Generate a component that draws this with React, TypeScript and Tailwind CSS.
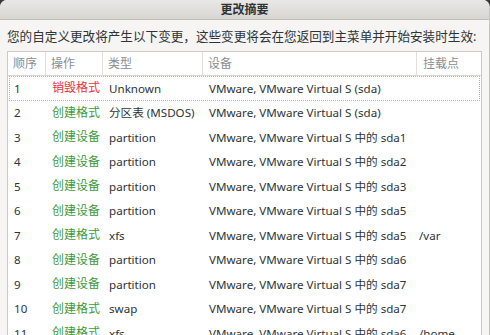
import React from "react";

const rows: [string, string, string, string, string][] = [
  ["1", "销毁格式", "Unknown", "VMware, VMware Virtual S (sda)", ""],
  ["2", "创建格式", "分区表 (MSDOS)", "VMware, VMware Virtual S (sda)", ""],
  ["3", "创建设备", "partition", "VMware, VMware Virtual S 中的 sda1", ""],
  ["4", "创建设备", "partition", "VMware, VMware Virtual S 中的 sda2", ""],
  ["5", "创建设备", "partition", "VMware, VMware Virtual S 中的 sda3", ""],
  ["6", "创建设备", "partition", "VMware, VMware Virtual S 中的 sda5", ""],
  ["7", "创建格式", "xfs", "VMware, VMware Virtual S 中的 sda5", "/var"],
  ["8", "创建设备", "partition", "VMware, VMware Virtual S 中的 sda6", ""],
  ["9", "创建设备", "partition", "VMware, VMware Virtual S 中的 sda7", ""],
  ["10", "创建格式", "swap", "VMware, VMware Virtual S 中的 sda7", ""],
  ["11", "创建格式", "xfs", "VMware, VMware Virtual S 中的 sda6", "/home"],
];

const font = {
  fontFamily: '"Noto Sans", "Noto Sans CJK SC", sans-serif',
};

export default function App() {
  return (
    <div className="h-[335px] w-[490px] overflow-hidden bg-[#3a3a3a]" style={font}>
      <div className="flex h-full flex-col overflow-hidden rounded-t-[7px] border-r border-[#c9c6c2] bg-[#f6f5f4] text-[#2e3436]">
        <div className="flex h-[20px] shrink-0 items-center justify-center border-b border-[#bfbbb6] bg-gradient-to-b from-[#e9e8e6] to-[#d8d6d3] text-[12px] font-bold leading-none text-[#2e3436]">
          更改摘要
        </div>
        <div className="mt-[8px] h-[18px] pl-[7px] text-[12.6px] leading-[18px] whitespace-nowrap">
          您的自定义更改将产生以下变更，这些变更将会在您返回到主菜单并开始安装时生效:
        </div>
        <div className="ml-[7px] mt-[5px] w-[475px] flex-1 border border-[#cdc9c4] bg-white">
          <div className="flex h-[24px] items-center border-b border-[#dcd9d5] text-[12px] text-[#8b8e8f]">
            <div className="flex h-full w-[38px] items-center border-r border-[#e3e0dc] pl-[5px]">顺序</div>
            <div className="flex h-full w-[57px] items-center border-r border-[#e3e0dc] pl-[5px]">操作</div>
            <div className="flex h-full w-[100px] items-center border-r border-[#e3e0dc] pl-[5px]">类型</div>
            <div className="flex h-full w-[214px] items-center border-r border-[#e3e0dc] pl-[5px]">设备</div>
            <div className="flex h-full flex-1 items-center pl-[6px]">挂载点</div>
          </div>
          {rows.map((r, i) => (
            <div
              key={r[0]}
              className={
                "flex h-[24.5px] items-center whitespace-nowrap text-[11.6px] " +
                (i === 0 ? "mx-[1px] border border-dotted border-[#b5b2ae]" : "mx-[1px] border border-transparent")
              }
            >
              <div className="w-[37px] pl-[4px]">{r[0]}</div>
              <div className={"w-[57px] pl-[5px] text-[12px] " + (r[1] === "销毁格式" ? "text-[#e5333d]" : "text-[#3c9a3c]")}>
                {r[1]}
              </div>
              <div className="w-[100px] pl-[5px]">{r[2]}</div>
              <div className="w-[214px] pl-[5px]">{r[3]}</div>
              <div className="flex-1 pl-[1px]">{r[4]}</div>
            </div>
          ))}
        </div>
      </div>
    </div>
  );
}
